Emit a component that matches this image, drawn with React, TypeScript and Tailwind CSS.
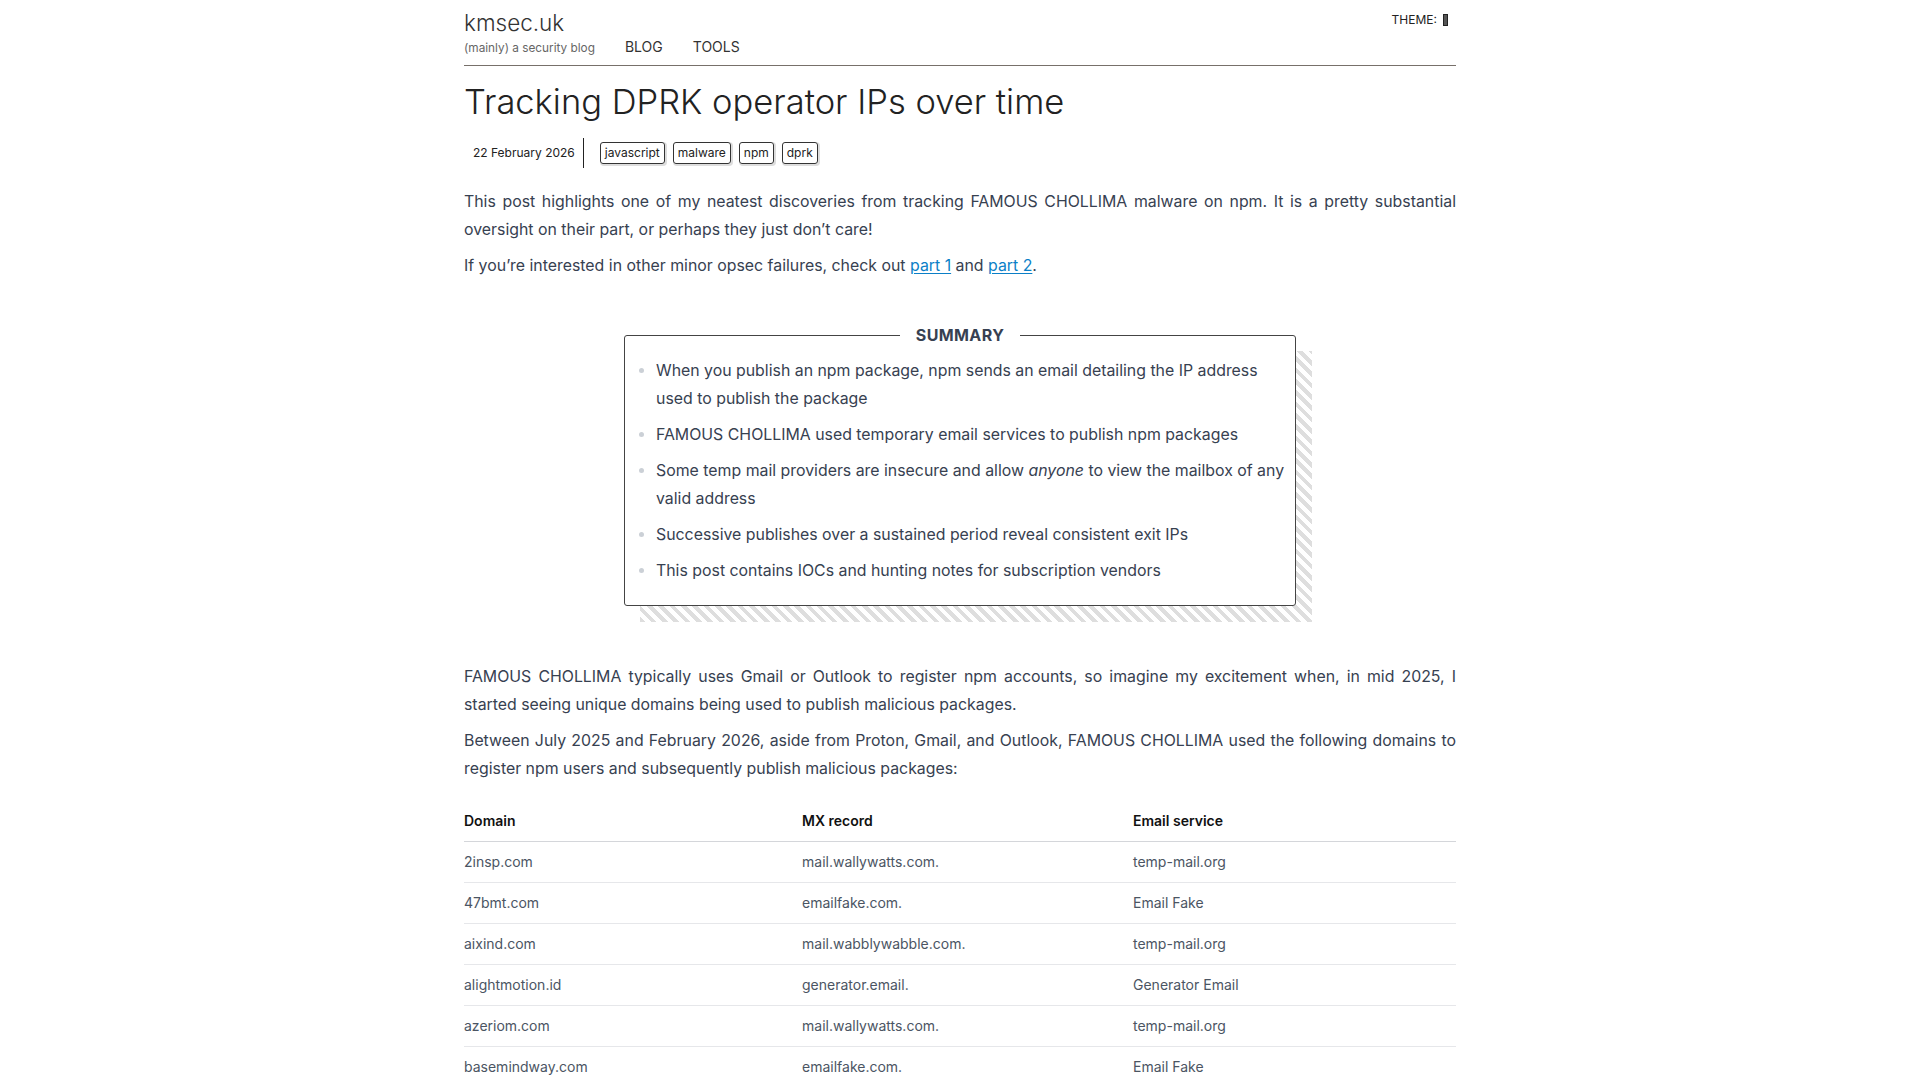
const tags = ['javascript', 'malware', 'npm', 'dprk'];

const summary: React.ReactNode[] = [
  'When you publish an npm package, npm sends an email detailing the IP address used to publish the package',
  'FAMOUS CHOLLIMA used temporary email services to publish npm packages',
  <>
    Some temp mail providers are insecure and allow <em>anyone</em> to view the mailbox of any valid address
  </>,
  'Successive publishes over a sustained period reveal consistent exit IPs',
  'This post contains IOCs and hunting notes for subscription vendors',
];

const domains = [
  ['2insp.com', 'mail.wallywatts.com.', 'temp-mail.org'],
  ['47bmt.com', 'emailfake.com.', 'Email Fake'],
  ['aixind.com', 'mail.wabblywabble.com.', 'temp-mail.org'],
  ['alightmotion.id', 'generator.email.', 'Generator Email'],
  ['azeriom.com', 'mail.wallywatts.com.', 'temp-mail.org'],
  ['basemindway.com', 'emailfake.com.', 'Email Fake'],
];

function Header() {
  return (
    <header className="flex justify-between items-start pt-2 pb-2 border-b border-[#77706a]">
      <div>
        <div className="text-[22.5px] leading-[30px] font-light text-[#333]">kmsec.uk</div>
        <div className="flex items-baseline gap-[30px] leading-[18px]">
          <span className="text-[11.8px] leading-[18px] text-[#666]">(mainly) a security blog</span>
          <a className="text-[14px] leading-[18px] text-[#333] uppercase">Blog</a>
          <a className="text-[14px] leading-[18px] text-[#333] uppercase">Tools</a>
        </div>
      </div>
      {/* theme toggle */}
      <div className="flex items-center gap-[6px] mt-[3px] pr-2 text-[12px] leading-[18px] text-[#222]">
        THEME:
        <span className="inline-block w-[5px] h-[12px] bg-[#555] border border-[#222]" />
      </div>
    </header>
  );
}

function Meta() {
  return (
    <div className="flex items-center mt-4 h-[30px]">
      <span className="h-full flex items-center pl-[9px] pr-[8px] border-r border-[#222] text-[12px] text-[#222]">
        22 February 2026
      </span>
      <div className="flex gap-2 ml-4">
        {tags.map((t) => (
          <span
            key={t}
            className="px-1 leading-5 text-[12px] text-[#222] border border-[#333] rounded-[3px] shadow-[1px_1px_0_1px_#ddd]"
          >
            {t}
          </span>
        ))}
      </div>
    </div>
  );
}

function Summary() {
  return (
    <div className="relative w-[672px] mx-auto mt-[43px]">
      {/* striped drop shadow */}
      <div className="absolute left-4 top-[28px] -right-4 -bottom-4 bg-[repeating-linear-gradient(45deg,#dedede_0_4px,#fff_4px_8px)]" />
      <fieldset className="relative bg-white border border-[#444] rounded-[3px] px-1 pb-[20px]">
        <legend className="mx-auto px-4 text-[16px] leading-6 font-bold tracking-wide text-[#374151]">
          SUMMARY
        </legend>
        <ul className="list-disc pl-[27px] pt-[10px] space-y-2 marker:text-[#cbd0d6]">
          {summary.map((s, i) => (
            <li key={i}>{s}</li>
          ))}
        </ul>
      </fieldset>
    </div>
  );
}

function DomainTable() {
  return (
    <table className="w-full mt-[18px] text-[14px] text-left border-collapse">
      <thead>
        <tr className="border-b border-[#d4d6da]">
          <th className="w-[338px] py-[10px] leading-5 font-semibold text-[#111]">Domain</th>
          <th className="w-[331px] py-[10px] leading-5 font-semibold text-[#111]">MX record</th>
          <th className="py-[10px] leading-5 font-semibold text-[#111]">Email service</th>
        </tr>
      </thead>
      <tbody>
        {domains.map((row) => (
          <tr key={row[0]} className="border-b border-[#e6e7ea]">
            {row.map((c, i) => (
              <td key={i} className="py-[10px] leading-5 text-[#4b5563]">
                {c}
              </td>
            ))}
          </tr>
        ))}
      </tbody>
    </table>
  );
}

export default function App() {
  return (
    <div className="min-h-screen bg-white font-['Inter','Noto_Sans',sans-serif]">
      <div className="max-w-[992px] mx-auto">
        <Header />
        <main>
          <h1 className="mt-4 text-[34.5px] leading-10 font-light text-[#222]">
            Tracking DPRK operator IPs over time
          </h1>
          <Meta />

          <div className="mt-5 text-[15.86px] leading-7 text-[#374151]">
            <p className="text-justify mb-2">
              This post highlights one of my neatest discoveries from tracking FAMOUS CHOLLIMA malware on npm. It
              is a pretty substantial oversight on their part, or perhaps they just don’t care!
            </p>
            <p>
              If you’re interested in other minor opsec failures, check out{' '}
              <a className="text-[#0b7fc7] underline underline-offset-2">part 1</a> and{' '}
              <a className="text-[#0b7fc7] underline underline-offset-2">part 2</a>.
            </p>

            <Summary />

            <p className="text-justify mt-[57px] mb-2">
              FAMOUS CHOLLIMA typically uses Gmail or Outlook to register npm accounts, so imagine my excitement
              when, in mid 2025, I started seeing unique domains being used to publish malicious packages.
            </p>
            <p className="text-justify">
              Between July 2025 and February 2026, aside from Proton, Gmail, and Outlook, FAMOUS CHOLLIMA used the
              following domains to register npm users and subsequently publish malicious packages:
            </p>
          </div>

          <DomainTable />
        </main>
      </div>
    </div>
  );
}
